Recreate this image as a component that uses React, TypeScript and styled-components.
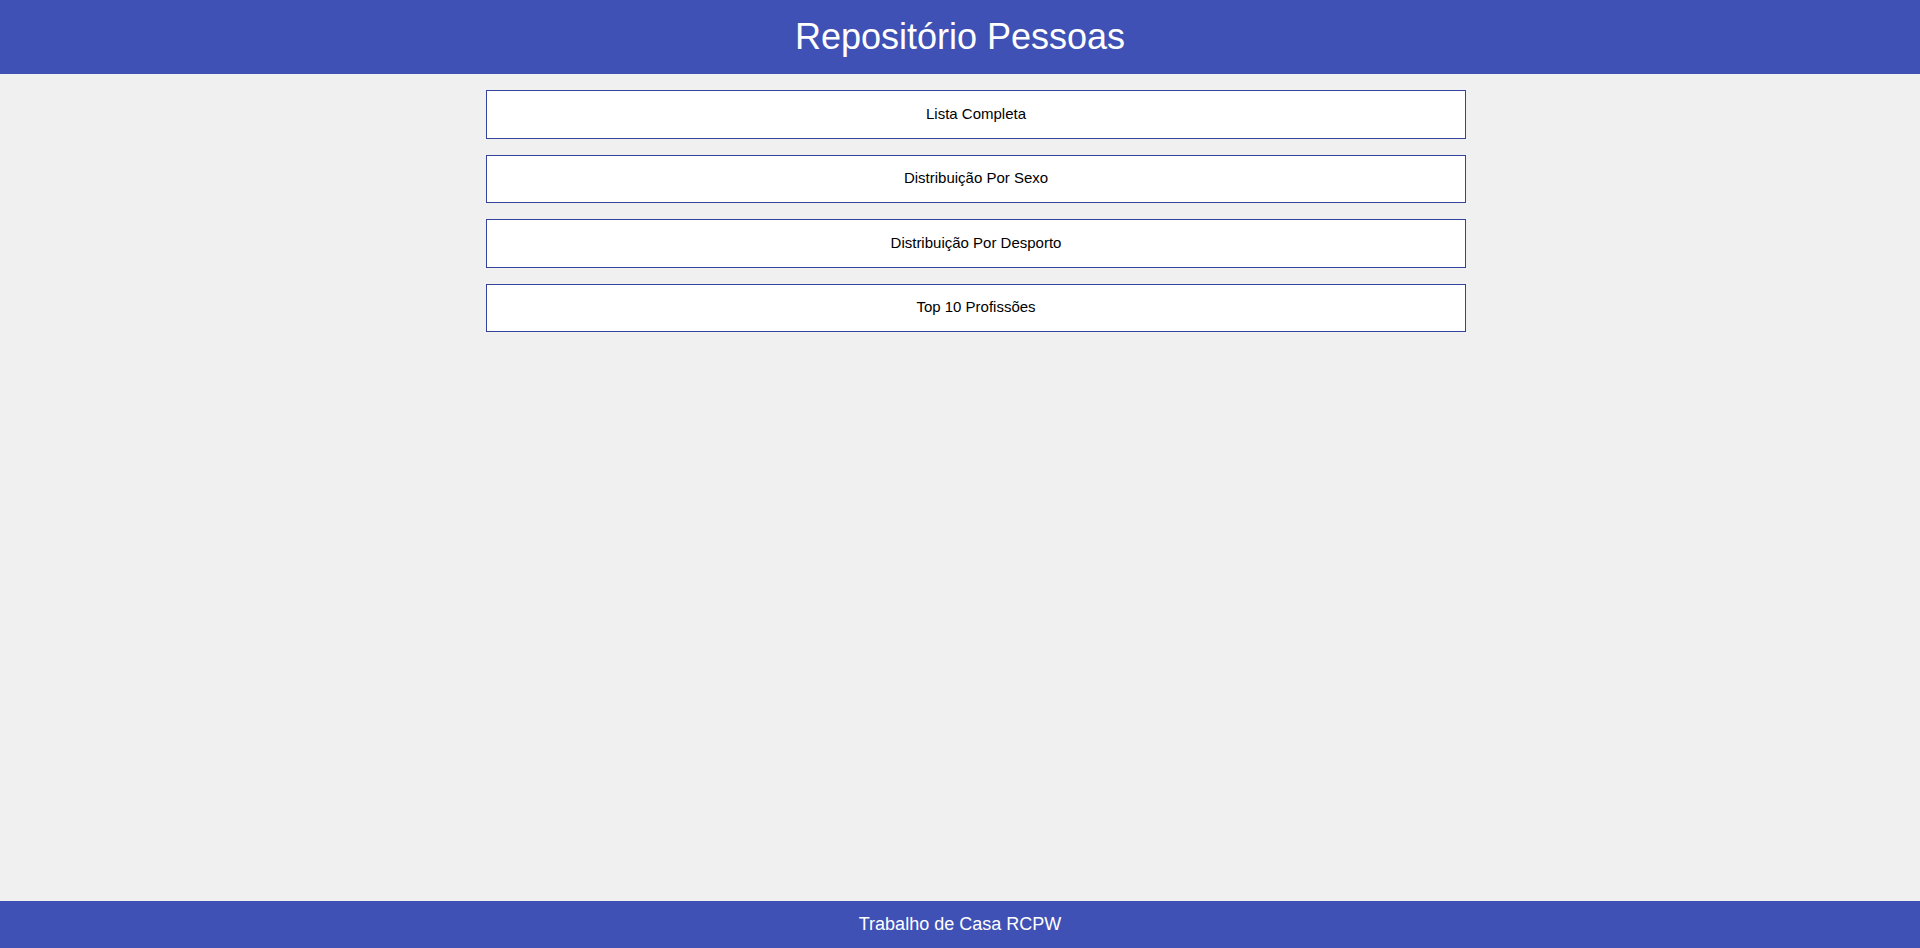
import React from "react";
import styled, { createGlobalStyle } from "styled-components";

const GlobalStyle = createGlobalStyle`
  html, body {
    margin: 0;
    padding: 0;
    background: #f0f0f0;
    font-family: "Liberation Sans", Arial, sans-serif;
  }
  * { box-sizing: border-box; }
`;

const Page = styled.div`
  display: flex;
  flex-direction: column;
  min-height: 100vh;
`;

const Header = styled.header`
  height: 74px;
  background: #3f51b5;
  display: flex;
  align-items: center;
  justify-content: center;
`;

const Title = styled.h1`
  margin: 0;
  color: #ffffff;
  font-size: 36px;
  font-weight: 400;
`;

const Main = styled.main`
  flex: 1;
  padding: 16px 0 0 32px;
`;

const Menu = styled.nav`
  width: 980px;
  margin: 0 auto;
  display: flex;
  flex-direction: column;
  gap: 16px;
`;

const MenuButton = styled.button`
  height: 48.5px;
  width: 100%;
  background: #ffffff;
  border: 1px solid #34449c;
  border-radius: 0;
  color: #000000;
  font-family: "Liberation Sans", Arial, sans-serif;
  font-size: 15px;
  cursor: pointer;
  display: flex;
  align-items: center;
  justify-content: center;
  padding: 0 0 2px 0;
`;

const Footer = styled.footer`
  height: 47px;
  background: #3f51b5;
  color: #ffffff;
  font-size: 18px;
  display: flex;
  align-items: center;
  justify-content: center;
`;

const items = [
  "Lista Completa",
  "Distribuição Por Sexo",
  "Distribuição Por Desporto",
  "Top 10 Profissões",
];

export default function App() {
  return (
    <>
      <GlobalStyle />
      <Page>
        <Header>
          <Title>Repositório Pessoas</Title>
        </Header>
        <Main>
          <Menu>
            {items.map((item) => (
              <MenuButton key={item}>{item}</MenuButton>
            ))}
          </Menu>
        </Main>
        <Footer>Trabalho de Casa RCPW</Footer>
      </Page>
    </>
  );
}
